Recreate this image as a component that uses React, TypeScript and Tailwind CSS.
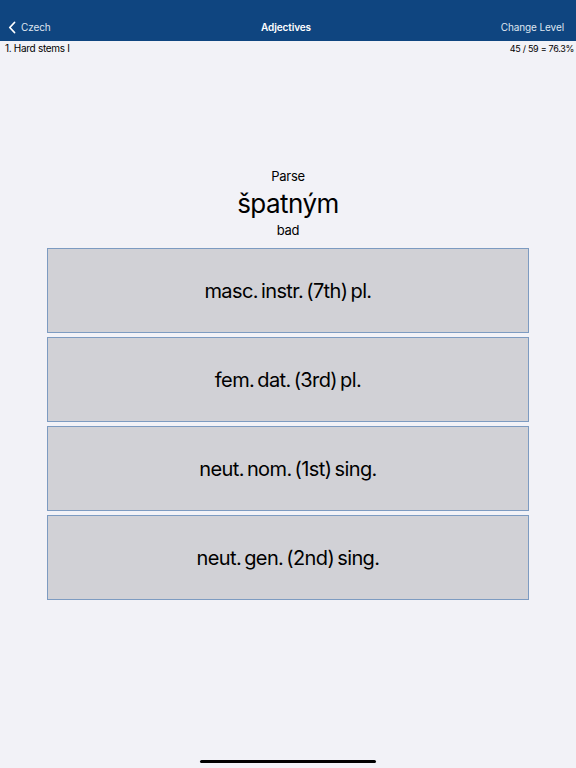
import React from "react";

const options = [
  "masc. instr. (7th) pl.",
  "fem. dat. (3rd) pl.",
  "neut. nom. (1st) sing.",
  "neut. gen. (2nd) sing.",
];

export default function App() {
  return (
    <div
      className="w-[576px] h-[768px] bg-[#f2f2f7] flex flex-col text-black overflow-hidden"
      style={{ fontFamily: 'Inter, "Noto Sans", sans-serif' }}
    >
      <div className="h-[41px] bg-[#0f4580] flex items-end pb-[6px] px-[8px] text-white text-[10px] tracking-[-0.01em]">
        <div className="flex-1 flex items-center gap-[5px] text-[#dfe6f0]">
          <svg width="8" height="13" viewBox="0 0 8 13" fill="none">
            <path d="M6.5 1.5 L1.8 6.5 L6.5 11.5" stroke="#ffffff" strokeWidth="1.8" strokeLinecap="round" strokeLinejoin="round" />
          </svg>
          <span>Czech</span>
        </div>
        <div className="flex-1 text-center font-semibold">Adjectives</div>
        <div className="flex-1 text-right pr-[4px] text-[#dfe6f0]">Change Level</div>
      </div>
      <div className="flex justify-between items-center pl-[5px] pr-[2px] h-[13px] text-[10px] leading-none tracking-[-0.03em] pt-[1px]">
        <span>1. Hard stems I</span>
        <span className="text-[9px]">45 / 59 = 76.3%</span>
      </div>
      <div className="flex flex-col items-center pt-[114px]">
        <div className="text-[13px] leading-[16px] tracking-[-0.02em]">Parse</div>
        <div className="text-[26px] leading-[30px] mt-[5px] tracking-[-0.02em]">špatným</div>
        <div className="text-[13px] leading-[16px] mt-[3px] tracking-[-0.02em]">bad</div>
      </div>
      <div className="flex flex-col gap-[4px] px-[47px] mt-[10px]">
        {options.map((o) => (
          <div
            key={o}
            className="h-[85px] bg-[#d1d1d6] border border-[#7d9bc1] flex items-center justify-center text-[20px] tracking-[-0.03em] [word-spacing:-2px]"
          >
            {o}
          </div>
        ))}
      </div>
      <div className="flex-1" />
      <div className="flex justify-center pb-[5px]">
        <div className="w-[176px] h-[3px] rounded-full bg-black" />
      </div>
    </div>
  );
}
